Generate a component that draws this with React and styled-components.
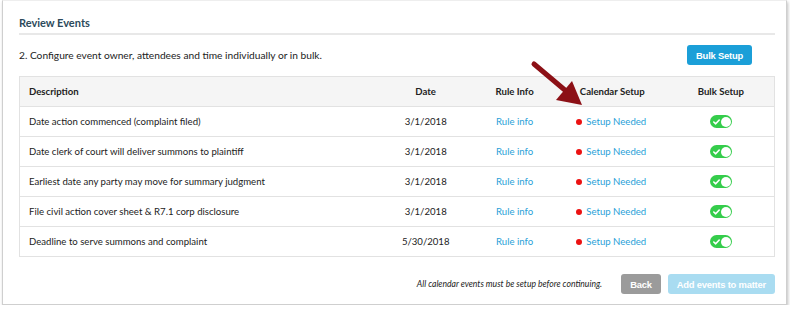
import React from 'react';
import styled, { createGlobalStyle } from 'styled-components';

const GlobalStyle = createGlobalStyle`
    body {
        margin: 0;
        background: #fff;
        font-family: Lato, "Open Sans", sans-serif;
        color: #333;
    }
`

const Panel = styled.section`
    position: relative;
    box-sizing: border-box;
    margin-left: 2px;
    width: 785px;
    height: 305px;
    border: 1px solid #cfcfcf;
    border-top-color: #eee;
    box-shadow: 1px 2px 3px rgba(0, 0, 0, 0.25);
    padding: 15px 11px 0 16px;
`

const Title = styled.h2`
    margin: 0;
    font-size: 11px;
    line-height: 14px;
    font-weight: bold;
    color: #2c4a5b;
    padding-bottom: 3px;
    border-bottom: 2px solid #e8e8e8;
`

const Intro = styled.div`
    display: flex;
    align-items: center;
    justify-content: space-between;
    height: 40px;
    font-size: 10.2px;
    color: #222;
    padding: 0 23px 1px 0;
`

const Button = styled.button`
    font-family: "Liberation Sans", Arial, sans-serif;
    font-size: 9.4px;
    font-weight: bold;
    color: #fff;
    border: none;
    border-radius: 3px;
    height: 20px;
    padding: 0 9px;
    background: ${props => props.color};
    letter-spacing: -0.2px;
`

const Table = styled.table`
    width: 100%;
    border-collapse: collapse;
    border: 1px solid #e2e2e2;
    font-size: 9.6px;
    th, td {
        height: 29px;
        padding: 0;
        border-bottom: 1px solid #e2e2e2;
    }
    th {
        background: #f5f5f5;
        font-weight: bold;
        color: #222;
    }
`

const Cell = styled.td`
    text-align: ${props => props.left ? 'left' : 'center'};
    padding-left: ${props => props.left ? '9px' : '0'} !important;
    color: #222;
`

const Head = styled.th`
    width: ${props => props.w}px;
    text-align: ${props => props.left ? 'left' : 'center'};
    padding-left: ${props => props.left ? '9px' : '0'} !important;
`

const Link = styled.a`
    color: #2a9fd8;
    text-decoration: none;
`

const Status = styled.span`
    display: inline-flex;
    align-items: center;
    gap: 4px;
    margin-left: -2px;
    &::before {
        content: '';
        width: 6px;
        height: 6px;
        border-radius: 50%;
        background: #ec1111;
    }
`

const Toggle = styled.span`
    display: inline-flex;
    align-items: center;
    justify-content: space-between;
    box-sizing: border-box;
    width: 22px;
    height: 13px;
    border-radius: 7px;
    background: #35cd4b;
    padding: 0 1px 0 3px;
    vertical-align: middle;
    &::after {
        content: '';
        width: 10px;
        height: 10px;
        border-radius: 50%;
        background: #fff;
    }
`

const Footer = styled.div`
    display: flex;
    align-items: center;
    justify-content: flex-end;
    gap: 7px;
    margin-top: 17px;
    font-size: 8.6px;
    font-style: italic;
    color: #222;
`

const Note = styled.span`
    margin-right: 12px;
`

const Arrow = styled.svg`
    position: absolute;
    left: 526px;
    top: 58px;
`

const events = [
    ['Date action commenced (complaint filed)', '3/1/2018'],
    ['Date clerk of court will deliver summons to plaintiff', '3/1/2018'],
    ['Earliest date any party may move for summary judgment', '3/1/2018'],
    ['File civil action cover sheet & R7.1 corp disclosure', '3/1/2018'],
    ['Deadline to serve summons and complaint', '5/30/2018'],
]

const Check = () => (
    <svg width="7" height="6" viewBox="0 0 7 6">
        <path d="M0.8 3 L2.7 4.8 L6.2 1" stroke="#fff" strokeWidth="1.6" fill="none" strokeLinecap="round" strokeLinejoin="round" />
    </svg>
)

export default function App() {
    return (
        <>
            <GlobalStyle />
            <Panel>
                <Title>Review Events</Title>
                <Intro>
                    <span>2. Configure event owner, attendees and time individually or in bulk.</span>
                    <Button color="#1b9fd8">Bulk Setup</Button>
                </Intro>
                <Table>
                    <thead>
                        <tr>
                            <Head left w={356}>Description</Head>
                            <Head w={94}>Date</Head>
                            <Head w={86}>Rule Info</Head>
                            <Head w={112}>Calendar Setup</Head>
                            <Head w={108}>Bulk Setup</Head>
                        </tr>
                    </thead>
                    <tbody>
                        {events.map(([desc, date]) => (
                            <tr key={desc}>
                                <Cell left>{desc}</Cell>
                                <Cell>{date}</Cell>
                                <Cell><Link href="#">Rule info</Link></Cell>
                                <Cell><Status><Link href="#">Setup Needed</Link></Status></Cell>
                                <Cell><Toggle><Check /></Toggle></Cell>
                            </tr>
                        ))}
                    </tbody>
                </Table>
                <Footer>
                    <Note>All calendar events must be setup before continuing.</Note>
                    <Button color="#9b9b9b">Back</Button>
                    <Button color="#a9dcf1">Add events to matter</Button>
                </Footer>
                <Arrow width="56" height="50" viewBox="0 0 56 50">
                    <line x1="5" y1="5" x2="37" y2="32" stroke="#8c1016" strokeWidth="5" strokeLinecap="round" />
                    <polygon points="53,46 27,41 43,22" fill="#8c1016" />
                </Arrow>
            </Panel>
        </>
    );
}
